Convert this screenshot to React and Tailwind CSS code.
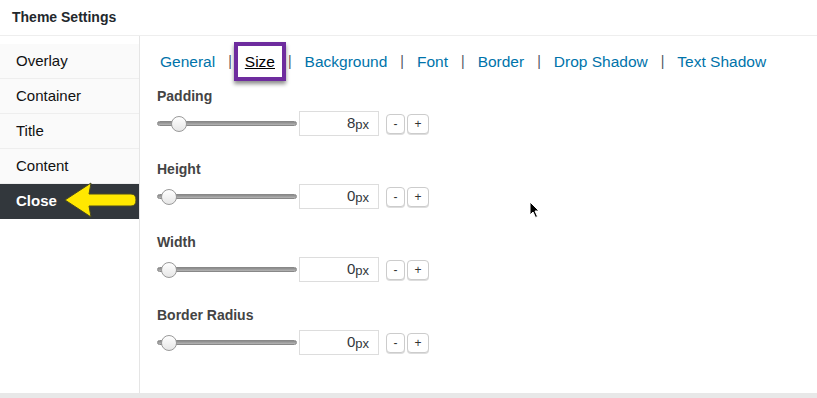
import React from "react";

const tabs = ["General", "Size", "Background", "Font", "Border", "Drop Shadow", "Text Shadow"];
const menu = ["Overlay", "Container", "Title", "Content", "Close"];
const fields = [
  { label: "Padding", value: 8, pos: 22 },
  { label: "Height", value: 0, pos: 12 },
  { label: "Width", value: 0, pos: 12 },
  { label: "Border Radius", value: 0, pos: 12 },
];

function Slider({ pos }) {
  return (
    <div className="relative w-[140px] h-[16px] flex items-center">
      <div className="w-full h-[5px] rounded-full bg-gradient-to-b from-[#8a8a8a] to-[#b5b5b5] border border-[#888]" />
      <div
        className="absolute top-0 w-[16px] h-[16px] rounded-full bg-gradient-to-b from-white to-[#e6e6e6] border border-[#9a9a9a]"
        style={{ left: pos - 8 }}
      />
    </div>
  );
}

function Field({ label, value, pos }) {
  return (
    <div className="h-[73px]">
      <div className="text-[14px] font-bold text-[#444] leading-[18px]">{label}</div>
      <div className="flex items-center mt-[6px]">
        <Slider pos={pos} />
        <div className="ml-[2px] w-[80px] h-[25px] border border-[#ddd] flex items-center justify-end pr-[9px] text-[#32373c]">
          <span className="text-[15px]">{value}</span>
          <span className="text-[13px] mt-[2px]">px</span>
        </div>
        <div className="ml-[7px] flex gap-[2px]">
          <button className="w-[19px] h-[20px] border border-[#ccc] rounded-[4px] text-[12px] leading-none text-[#333] bg-white shadow-[0_1px_0_#ddd]">-</button>
          <button className="w-[22px] h-[20px] border border-[#ccc] rounded-[4px] text-[12px] leading-none text-[#333] bg-white shadow-[0_1px_0_#ddd]">+</button>
        </div>
      </div>
    </div>
  );
}

export default function App() {
  return (
    <div
      className="relative w-[817px] h-[398px] bg-white flex flex-col overflow-hidden"
      style={{ fontFamily: '"Liberation Sans", Arial, sans-serif' }}
    >
      <div className="h-[36px] shrink-0 border-b border-[#eee] px-[12px] flex items-center text-[14px] font-bold text-[#23282d]">
        Theme Settings
      </div>
      <div className="flex flex-1">
        <div className="w-[140px] shrink-0 border-r border-[#e5e5e5] pt-[8px]">
          {menu.map((m) => (
            <div
              key={m}
              className={
                m === "Close"
                  ? "h-[35px] pl-[16px] flex items-center text-[15px] font-bold text-white bg-[#32373c]"
                  : "h-[35px] pl-[16px] flex items-center text-[15px] text-[#111] bg-[#fafafa] border-b border-[#eee]"
              }
            >
              {m}
            </div>
          ))}
        </div>
        <div className="flex-1 pl-[17px]">
          <div className="flex items-center h-[44px] pt-[7px] pl-[3px] text-[15.5px]">
            {tabs.map((t, i) => (
              <React.Fragment key={t}>
                {i > 0 && <span className="text-[#50575e] mx-[13px] text-[14px]">|</span>}
                {t === "Size" ? (
                  <span className="relative -mx-[11px] border-[4px] border-[#6e2c9e] px-[7px] py-[4px] text-black underline shadow-[0_3px_4px_rgba(0,0,0,0.45)]">
                    Size
                  </span>
                ) : (
                  <span className="text-[#0073aa]">{t}</span>
                )}
              </React.Fragment>
            ))}
          </div>
          <div className="mt-[7px]">
            {fields.map((f) => (
              <Field key={f.label} {...f} />
            ))}
          </div>
        </div>
      </div>
      <div className="h-[5px] shrink-0 bg-[#e8e8e8]" />

      <svg className="absolute left-[60px] top-[180px]" width="82" height="42" viewBox="0 0 82 42">
        <path
          d="M5 20 L31 3 L29 14 L71 14 Q76 14 76 20 Q76 26 71 26 L29 26 L31 37 Z"
          fill="#ffe800"
          stroke="#4a4a20"
          strokeWidth="1"
          strokeLinejoin="round"
        />
      </svg>

      <svg className="absolute left-[529px] top-[201px]" width="12" height="18" viewBox="0 0 12 18">
        <path d="M1 1 L1 14 L4 11 L6.5 16.5 L8.5 15.5 L6 10 L10 10 Z" fill="#000" stroke="#fff" strokeWidth="1" />
      </svg>
    </div>
  );
}
